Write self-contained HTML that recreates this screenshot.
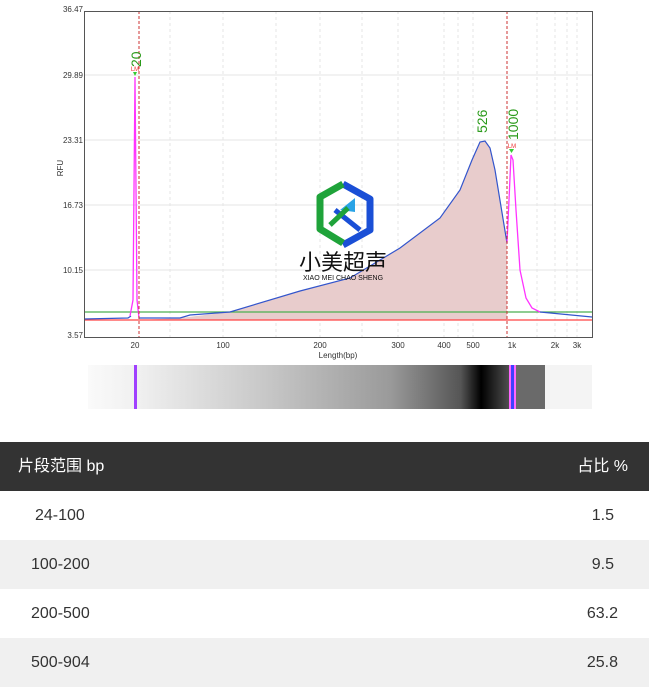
<!DOCTYPE html>
<html><head><meta charset="utf-8"><style>
html,body{margin:0;padding:0;background:#fff;width:649px;height:686px;overflow:hidden;font-family:"Liberation Sans","Noto Sans CJK SC",sans-serif}
.t{position:absolute;left:0;width:649px;height:49px;font-size:16px;color:#333;line-height:49px}
.t span{position:absolute}
</style></head><body>
<svg width="649" height="440" style="position:absolute;left:0;top:0" font-family="Liberation Sans, sans-serif">
<defs>
<linearGradient id="gel" x1="0" x2="1">
<stop offset="0" stop-color="#fafafa"/>
<stop offset="0.1" stop-color="#f0f0f0"/>
<stop offset="0.35" stop-color="#c8c8c8"/>
<stop offset="0.6" stop-color="#9a9a9a"/>
<stop offset="0.74" stop-color="#555"/>
<stop offset="0.78" stop-color="#000"/>
<stop offset="0.84" stop-color="#555"/>
</linearGradient>
</defs>
<!-- grid -->
<g stroke="#e6e6e6" stroke-width="1">
<line x1="84" y1="75" x2="592" y2="75"/><line x1="84" y1="140" x2="592" y2="140"/>
<line x1="84" y1="205" x2="592" y2="205"/><line x1="84" y1="270" x2="592" y2="270"/>
</g>
<g stroke="#e6e6e6" stroke-dasharray="3,3">
<line x1="170" y1="11" x2="170" y2="337"/><line x1="223" y1="11" x2="223" y2="337"/><line x1="276" y1="11" x2="276" y2="337"/>
<line x1="320" y1="11" x2="320" y2="337"/><line x1="362" y1="11" x2="362" y2="337"/><line x1="398" y1="11" x2="398" y2="337"/>
<line x1="444" y1="11" x2="444" y2="337"/><line x1="458" y1="11" x2="458" y2="337"/><line x1="473" y1="11" x2="473" y2="337"/>
<line x1="537" y1="11" x2="537" y2="337"/><line x1="555" y1="11" x2="555" y2="337"/><line x1="567" y1="11" x2="567" y2="337"/><line x1="577" y1="11" x2="577" y2="337"/>
</g>
<!-- fill -->
<path d="M139,320 L180,318 L230,312 L300,291 L350,278 L400,248 L440,218 L460,190 L472,160 L480,142 L485,141 L490,148 L495,170 L507,243 L507,320 Z" fill="#e8cccc"/>
<line x1="84" y1="312" x2="592" y2="312" stroke="#4caf50" stroke-width="1.3"/>
<line x1="84" y1="320" x2="592" y2="320" stroke="#f44" stroke-width="1.3"/>
<path d="M84,319 L128,318 L131,316 M139,318 L180,318 L190,315 L230,312 L300,291 L350,278 L400,248 L440,218 L460,190 L472,160 L480,142 L485,141 L490,148 L495,170 L507,243 M540,312 L592,317" fill="none" stroke="#3355cc" stroke-width="1.2"/>
<path d="M130,316 L133,300 L135,77 L137,300 L139,318 M507,243 L509,200 L511,155 L513,160 L516,210 L520,270 L526,298 L532,308 L540,312" fill="none" stroke="#ff33ff" stroke-width="1.3"/>
<line x1="139" y1="11" x2="139" y2="337" stroke="#c33" stroke-dasharray="3,2"/>
<line x1="507" y1="11" x2="507" y2="337" stroke="#c33" stroke-dasharray="3,2"/>
<rect x="84.5" y="11.5" width="508" height="326" fill="none" stroke="#555"/>
<!-- labels -->
<g font-size="8" fill="#333" text-anchor="end">
<text x="83" y="12">36.47</text><text x="83" y="78">29.89</text><text x="83" y="143">23.31</text>
<text x="83" y="208">16.73</text><text x="83" y="273">10.15</text><text x="83" y="338">3.57</text>
</g>
<text x="63" y="168" font-size="8" fill="#333" transform="rotate(-90 63 168)" text-anchor="middle">RFU</text>
<g font-size="8" fill="#333" text-anchor="middle">
<text x="135" y="348">20</text><text x="223" y="348">100</text><text x="320" y="348">200</text><text x="398" y="348">300</text>
<text x="444" y="348">400</text><text x="473" y="348">500</text><text x="512" y="348">1k</text><text x="555" y="348">2k</text><text x="577" y="348">3k</text>
<text x="338" y="358">Length(bp)</text>
</g>
<g font-size="14" fill="#2a9a1a">
<text transform="translate(141,67) rotate(-90)">20</text>
<text transform="translate(487,133) rotate(-90)">526</text>
<text transform="translate(518,140) rotate(-90)">1000</text>
</g>
<text x="135" y="71" font-size="6" fill="#e33" text-anchor="middle">LM</text>
<text x="512" y="148" font-size="6" fill="#e33" text-anchor="middle">LM</text>
<path d="M133,72 h4 l-2,4z" fill="#3c3"/><path d="M509,149 h5 l-2.5,4z" fill="#3c3"/>
<!-- logo -->
<path d="M343,184 L370,199 L370,230 L343,245" fill="none" stroke="#1a4fd6" stroke-width="7" stroke-linejoin="round"/>
<path d="M343,184 L320,197 L320,229 L343,243" fill="none" stroke="#1fa33a" stroke-width="7" stroke-linejoin="round"/>
<path d="M340,210 L355,198 L355,212 Z" fill="#29a3e6"/>
<path d="M335,210 L360,230" stroke="#1a4fd6" stroke-width="5"/>
<path d="M330,225 L348,208" stroke="#1fa33a" stroke-width="5"/>
<text x="343" y="270" font-size="22" fill="#111" text-anchor="middle" font-family="Noto Sans CJK SC, sans-serif">小美超声</text>
<text x="343" y="280" font-size="7" fill="#111" text-anchor="middle">XIAO MEI CHAO SHENG</text>
<!-- gel -->
<rect x="88" y="365" width="504" height="44" fill="url(#gel)"/>
<rect x="515" y="365" width="30" height="44" fill="#6a6a6a"/>
<rect x="545" y="365" width="47" height="44" fill="#f4f4f4"/>
<rect x="134" y="365" width="3" height="44" fill="#a040ff"/>
<rect x="509" y="365" width="7" height="44" fill="#ff66ff"/>
<rect x="511" y="365" width="3" height="44" fill="#4040ff"/>
</svg>
<div class="t" style="top:442px;background:#333;color:#fff"><span style="left:18px">片段范围 bp</span><span style="right:21px">占比 %</span></div>
<div class="t" style="top:491px;background:#fff"><span style="left:35px">24-100</span><span style="right:35px">1.5</span></div>
<div class="t" style="top:540px;background:#f0f0f0"><span style="left:31px">100-200</span><span style="right:35px">9.5</span></div>
<div class="t" style="top:589px;background:#fff"><span style="left:31px">200-500</span><span style="right:31px">63.2</span></div>
<div class="t" style="top:638px;background:#f0f0f0"><span style="left:31px">500-904</span><span style="right:31px">25.8</span></div>
</body></html>
